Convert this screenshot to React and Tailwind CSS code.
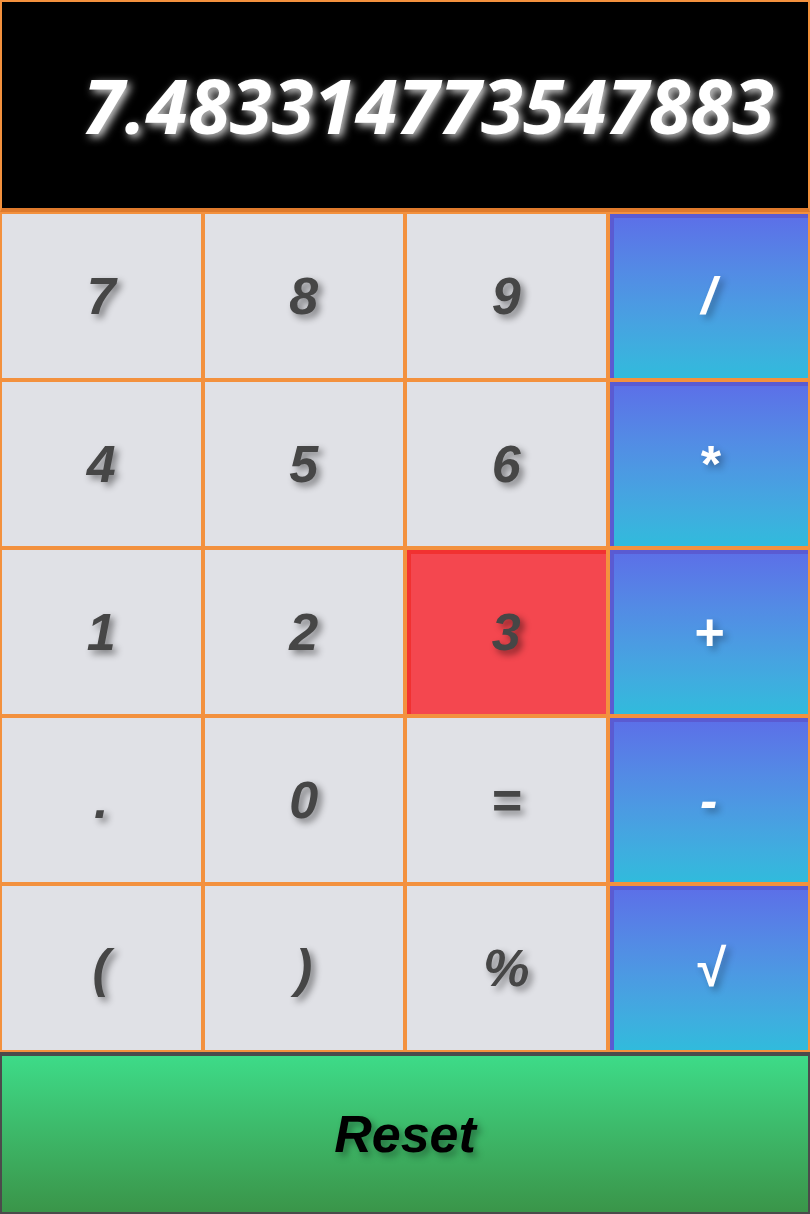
import React from "react";

const keys = [
  ["7", "8", "9", "/"],
  ["4", "5", "6", "*"],
  ["1", "2", "3", "+"],
  [".", "0", "=", "-"],
  ["(", ")", "%", "√"],
];

const ops = ["/", "*", "+", "-", "√"];

function Key({ label, active }) {
  const isOp = ops.includes(label);
  let look = "bg-[#e0e1e6] text-[#464646] [text-shadow:4px_4px_7px_rgba(0,0,0,0.45)]";
  if (isOp) {
    look =
      "bg-gradient-to-b from-[#5c6ee8] to-[#30bbdc] text-white shadow-[inset_4px_4px_0_#5a5bd2] [text-shadow:4px_4px_7px_rgba(0,0,0,0.3)]";
  }
  if (active) {
    look =
      "bg-[#f4474f] text-[#464646] shadow-[inset_4px_4px_0_#f13131] [text-shadow:4px_4px_7px_rgba(0,0,0,0.45)]";
  }
  return (
    <button
      className={`h-[168px] border-2 border-[#f3913e] flex items-center justify-center text-[52px] font-bold italic ${look}`}
    >
      {label}
    </button>
  );
}

export default function App() {
  return (
    <main className="w-full min-h-screen bg-white font-['Liberation_Sans',Arial,sans-serif]">
      {/* Display */}
      <div className="h-[212px] bg-black border-2 border-[#f3913e] border-b-4 border-b-[#df7a2c] flex items-center justify-end pr-[34px]">
        <span className="text-white text-[76px] font-bold italic font-['Open_Sans',sans-serif] [text-shadow:3px_3px_8px_rgba(255,255,255,0.85)]">
          7.483314773547883
        </span>
      </div>

      {/* Keypad */}
      <div className="grid grid-cols-4">
        {keys.flat().map((k) => (
          <Key key={k} label={k} active={k === "3"} />
        ))}
      </div>

      {/* Reset */}
      <button className="w-full h-[162px] border-2 border-t-4 border-[#4b4b4b] bg-gradient-to-b from-[#3ddb88] to-[#3a9549] flex items-center justify-center text-black text-[52px] font-bold italic [text-shadow:4px_4px_7px_rgba(0,0,0,0.35)]">
        Reset
      </button>
    </main>
  );
}
